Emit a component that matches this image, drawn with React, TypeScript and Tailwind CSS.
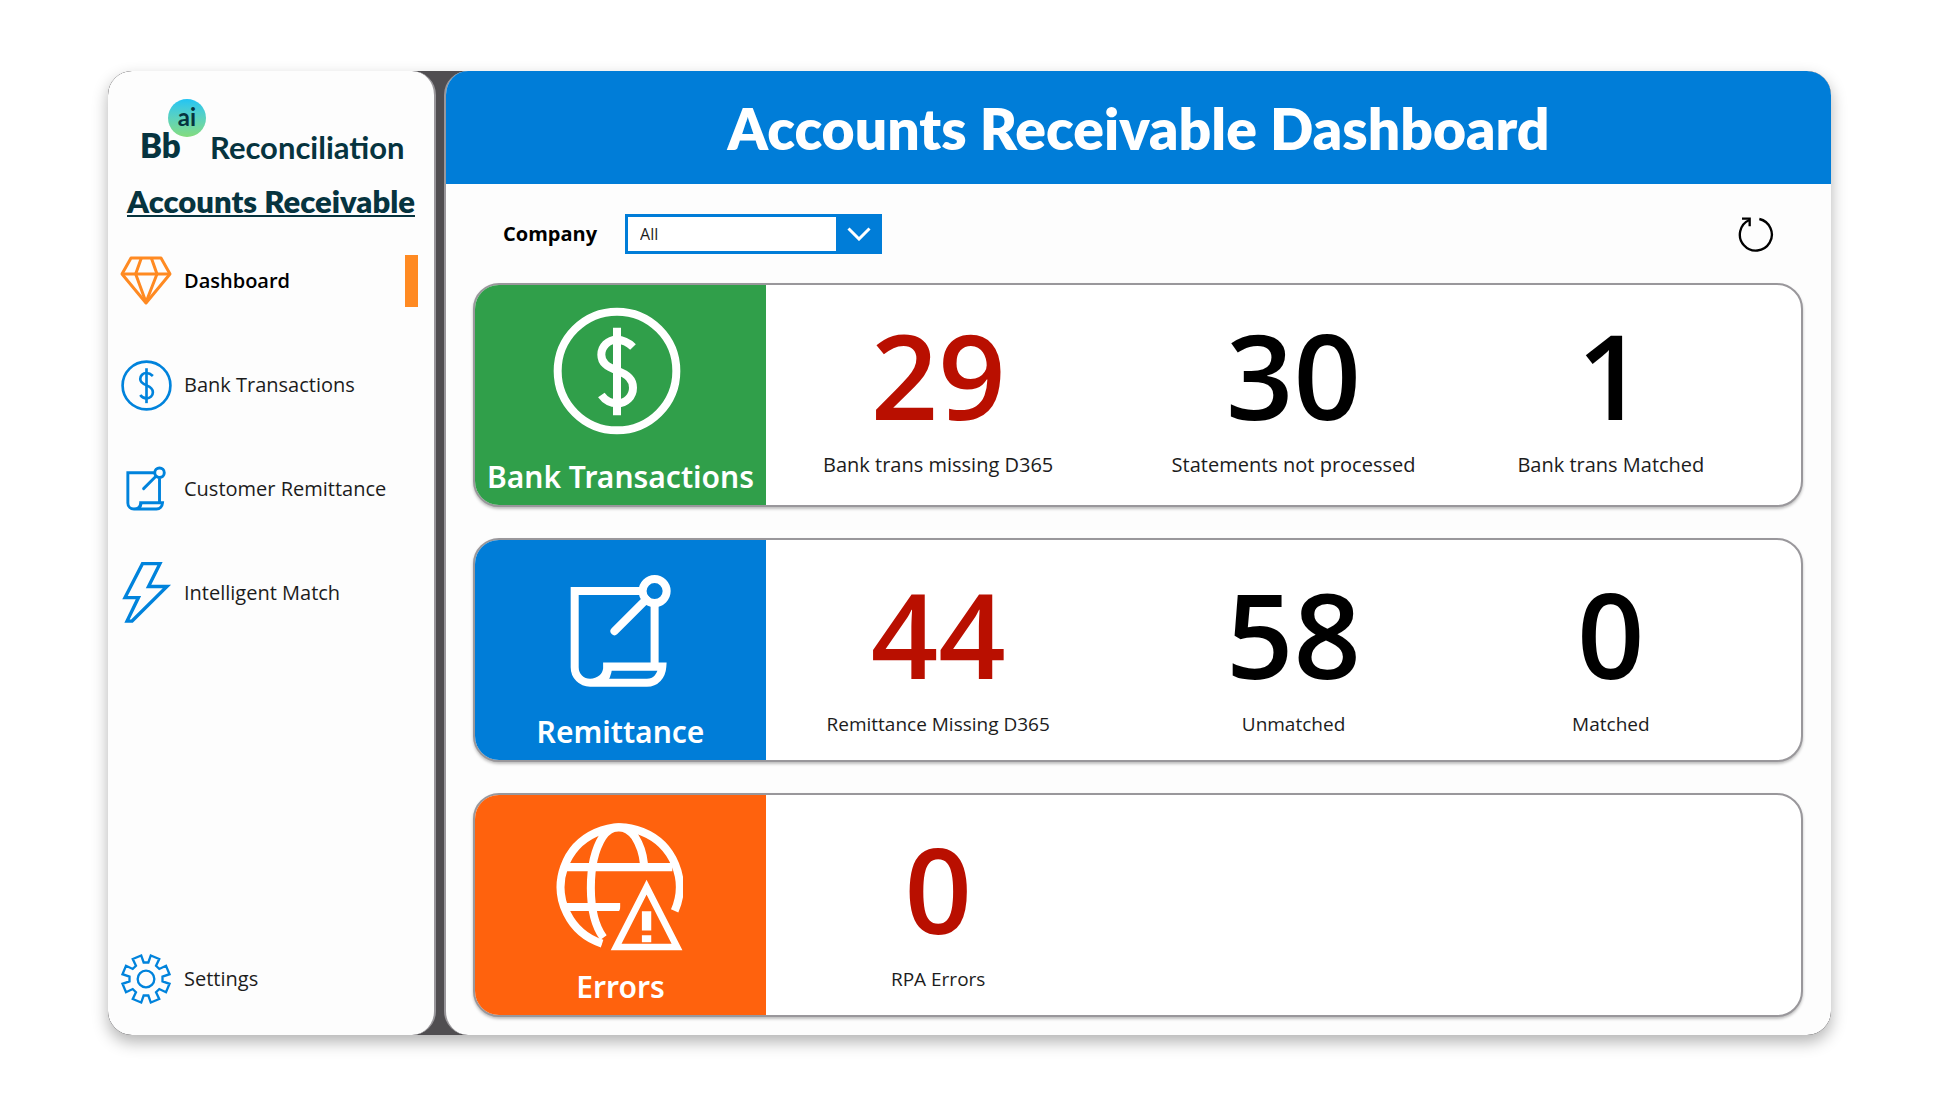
import React, { useState } from "react";
import clsx from "clsx";

type IconProps = {
  className?: string;
  strokeWidth?: number;
};

const DiamondIcon: React.FC<IconProps> = ({ className, strokeWidth = 9 }) => (
  <svg
    viewBox="90 616 156 148"
    className={className}
    fill="none"
    stroke="currentColor"
    strokeWidth={strokeWidth}
    strokeLinejoin="round"
    aria-hidden="true"
  >
    <path d="M123 622H213L240 670L168 757L96 670Z" />
    <path d="M96 670H240" />
    <path d="M154 622L137 670L168 755L201 670L184 622" />
  </svg>
);

const DollarIcon: React.FC<IconProps> = ({ className, strokeWidth = 24 }) => (
  <svg
    viewBox="277 111 384 384"
    className={className}
    fill="none"
    stroke="currentColor"
    strokeWidth={strokeWidth}
    aria-hidden="true"
  >
    <circle cx="469" cy="303" r={190 - strokeWidth / 2} />
    <path d="M469 173V436" />
    <path d="M517 231C506 220 488 209 468 209C442 209 422 230 422 254C422 278 438 290 470 302C502 315 517 328 517 353C517 380 496 400 470 400C450 400 432 389 422 375" />
  </svg>
);

const ScrollIcon: React.FC<IconProps> = ({ className, strokeWidth = 24 }) => (
  <svg
    viewBox="332 133 302 340"
    className={className}
    fill="none"
    stroke="currentColor"
    strokeWidth={strokeWidth}
    aria-hidden="true"
  >
    <path d="M544 184H346V412C346 438 366 458 392 458H562C588 458 606 438 608 410H443V416C441 440 420 458 392 458" />
    <path d="M446 414C444 430 438 446 428 456" />
    <path d="M585 226V408" />
    <circle cx="585" cy="184" r="36" />
    <path d="M560 209L465 304" strokeLinecap="round" />
  </svg>
);

const BoltIcon: React.FC<IconProps> = ({ className, strokeWidth = 10 }) => (
  <svg
    viewBox="62 726 152 188"
    className={className}
    fill="none"
    stroke="currentColor"
    strokeWidth={strokeWidth}
    aria-hidden="true"
  >
    <path d="M126 734H178L144 802H199L95 905H80L114 835H74Z" />
  </svg>
);

const GlobeWarningIcon: React.FC<IconProps> = ({ className, strokeWidth = 24 }) => (
  <svg
    viewBox="284 126 386 386"
    className={className}
    fill="none"
    stroke="currentColor"
    strokeWidth={strokeWidth}
    aria-hidden="true"
  >
    <path d="M428 490A178 178 0 1 1 645 392" />
    <path d="M432 472C382 404 382 246 430 170C456 132 498 132 526 170C540 192 550 220 553 250" />
    <path d="M318 261H638" />
    <path d="M316 380H482" />
    <path
      d="M424 503L441 466L458 466L440 512H424Z"
      className="fill-[#ff620d] stroke-none"
    />
    <path d="M490 368L478 394H500V368Z" className="fill-[#ff620d] stroke-none" />
    <path d="M561 321L470 500H652Z" strokeWidth="20" />
    <path d="M561 393V451M561 465V486" strokeWidth="28" />
  </svg>
);

const gearPath = Array.from({ length: 8 }, (_, i) => {
  const mid = i * 45 + 22.5;
  return [
    [mid - 14.5, 50],
    [mid - 11, 72],
    [mid + 11, 72],
    [mid + 14.5, 50],
  ]
    .map(([deg, r]) => {
      const rad = (deg * Math.PI) / 180;
      return `${(80 + r * Math.sin(rad)).toFixed(1)} ${(80 - r * Math.cos(rad)).toFixed(1)}`;
    })
    .join("L");
}).join("L");

const GearIcon: React.FC<IconProps> = ({ className, strokeWidth = 7 }) => (
  <svg
    viewBox="2 2 156 156"
    className={className}
    fill="none"
    stroke="currentColor"
    strokeWidth={strokeWidth}
    aria-hidden="true"
  >
    <path d={`M${gearPath}Z`} />
    <circle cx="80" cy="80" r="25" />
  </svg>
);

const RefreshIcon: React.FC<IconProps> = ({ className, strokeWidth = 7 }) => (
  <svg
    viewBox="296 494 108 110"
    className={className}
    fill="none"
    stroke="currentColor"
    strokeWidth={strokeWidth}
    aria-hidden="true"
  >
    <path d="M360 503A48 48 0 1 1 330 506" />
    <path d="M308 502H331V525" />
  </svg>
);

const Logo = () => (
  <div className="relative h-16 w-16 shrink-0 font-['Lato',sans-serif] text-[#06343f]">
    <span className="absolute bottom-0.5 left-0 text-[33px] leading-8 font-extrabold">Bb</span>
    <span className="absolute top-0 left-7 flex size-[38px] items-center justify-center rounded-full bg-linear-to-b from-[#1fc4f4] to-[#84dc7c] pb-0.5 text-2xl leading-6 font-bold">
      ai
    </span>
  </div>
);

const navItems = [
  { label: "Dashboard", icon: <DiamondIcon className="w-[52px] text-[#ff8a22]" /> },
  { label: "Bank Transactions", icon: <DollarIcon className="w-[51px]" strokeWidth={20} /> },
  { label: "Customer Remittance", icon: <ScrollIcon className="w-10" strokeWidth={22} /> },
  { label: "Intelligent Match", icon: <BoltIcon className="w-[51px]" /> },
];

type NavItemProps = {
  label: string;
  icon: React.ReactNode;
  active?: boolean;
  onClick?: () => void;
};

const NavItem: React.FC<NavItemProps> = ({ label, icon, active, onClick }) => (
  <a
    href="#"
    onClick={onClick}
    aria-current={active ? "page" : undefined}
    className={clsx(
      "flex h-16 items-center pr-4 pl-3 text-xl leading-7 text-[#1c1c1c]",
      active && "font-semibold text-black"
    )}
  >
    <span className="flex w-[52px] shrink-0 justify-center text-[#0083dc]">{icon}</span>
    <span className="ml-3 grow whitespace-nowrap">{label}</span>
    {active && <span className="h-[52px] w-[13px] bg-[#ff8a22]" />}
  </a>
);

type Stat = {
  value: number;
  label: string;
  alert?: boolean;
};

type StatCardProps = {
  title: string;
  icon: React.ReactNode;
  color: string;
  stats: Stat[];
  large?: boolean;
};

const StatCard: React.FC<StatCardProps> = ({ title, icon, color, stats, large }) => (
  <section className="flex h-56 overflow-hidden rounded-[26px] border-2 border-[#99979b] bg-white shadow-[0_2px_3px_rgba(0,0,0,0.25)]">
    <div
      className={clsx(
        "flex w-[291px] shrink-0 flex-col items-center justify-end pb-2 text-white",
        color
      )}
    >
      {icon}
      <h2 className="font-['Noto_Sans',sans-serif] text-3xl leading-10 font-semibold whitespace-nowrap">
        {title}
      </h2>
    </div>
    <div className="grid grow grid-cols-[344fr_366fr_268fr] pr-14">
      {stats.map((stat) => (
        <div
          key={stat.label}
          className={clsx("flex flex-col items-center", large ? "pt-7" : "pt-8")}
        >
          <span
            className={clsx(
              "text-[118px] leading-[124px] font-semibold",
              stat.alert ? "text-[#b90f00]" : "text-black"
            )}
          >
            {stat.value}
          </span>
          <span
            className={clsx(
              "mt-3.5 leading-7 whitespace-nowrap text-[#1c1c1c]",
              large ? "text-xl" : "text-[19px]"
            )}
          >
            {stat.label}
          </span>
        </div>
      ))}
    </div>
  </section>
);

const App = () => {
  const [company, setCompany] = useState("All");
  const [page, setPage] = useState("Dashboard");

  return (
    <div className="min-h-screen bg-white pt-[71px] pr-[129px] pb-[85px] pl-[108px] font-['Open_Sans',sans-serif]">
      <div className="flex min-h-[964px] overflow-hidden rounded-3xl bg-[#504e51] shadow-[0_7px_16px_rgba(0,0,0,0.3)]">
        <aside className="flex w-[328px] shrink-0 flex-col rounded-3xl border-r-2 border-[#99979b] bg-[#fdfdfd]">
          <div className="flex items-end pt-7 pl-8 font-['Lato',sans-serif] text-[#06343f]">
            <Logo />
            <span className="ml-1.5 text-[31px] leading-8 font-bold">Reconciliation</span>
          </div>
          <h2 className="mt-4.5 text-center font-['Lato',sans-serif] text-[31px] leading-10 font-extrabold whitespace-nowrap text-[#06343f] underline decoration-2 underline-offset-2">
            Accounts Receivable
          </h2>
          <nav className="mt-7 flex flex-col gap-10">
            {navItems.map((item) => (
              <NavItem
                key={item.label}
                label={item.label}
                icon={item.icon}
                active={page === item.label}
                onClick={() => setPage(item.label)}
              />
            ))}
          </nav>
          <div className="mt-auto pb-6">
            <NavItem label="Settings" icon={<GearIcon className="w-[52px]" />} />
          </div>
        </aside>

        <main className="ml-2 flex grow flex-col overflow-hidden rounded-3xl border-l-2 border-[#99979b] bg-[#fdfdfd]">
          <header className="flex h-[113px] items-center justify-center bg-[#007dd8]">
            <h1 className="font-['Lato',sans-serif] text-[57px] leading-[72px] font-extrabold text-white">
              Accounts Receivable Dashboard
            </h1>
          </header>

          <div className="flex items-center pt-[30px] pr-[57px] pl-[57px]">
            <label htmlFor="company" className="text-xl leading-7 font-bold text-black">
              Company
            </label>
            <div className="relative ml-7">
              <select
                id="company"
                value={company}
                onChange={(e) => setCompany(e.target.value)}
                className="block h-10 w-[257px] appearance-none border-[3px] border-[#007dd8] bg-white pl-3 text-base text-[#1c1c1c]"
              >
                <option>All</option>
              </select>
              <span className="pointer-events-none absolute inset-y-0 right-0 flex w-[46px] items-center justify-center bg-[#007dd8] text-white">
                <svg
                  viewBox="0 0 24 14"
                  className="w-6"
                  fill="none"
                  stroke="currentColor"
                  strokeWidth="3"
                  aria-hidden="true"
                >
                  <path d="M1.5 1.5L12 12L22.5 1.5" />
                </svg>
              </span>
            </div>
            <button type="button" aria-label="Refresh" className="ml-auto text-black">
              <RefreshIcon className="w-9" />
            </button>
          </div>

          <div className="flex flex-col gap-[31px] pt-[29px] pr-7 pb-[17px] pl-[27px]">
            <StatCard
              title="Bank Transactions"
              color="bg-[#309f4a]"
              icon={<DollarIcon className="mr-2 mb-[22px] w-32" />}
              large
              stats={[
                { value: 29, label: "Bank trans missing D365", alert: true },
                { value: 30, label: "Statements not processed" },
                { value: 1, label: "Bank trans Matched" },
              ]}
            />
            <StatCard
              title="Remittance"
              color="bg-[#007dd8]"
              icon={<ScrollIcon className="mb-6 w-[101px]" />}
              stats={[
                { value: 44, label: "Remittance Missing D365", alert: true },
                { value: 58, label: "Unmatched" },
                { value: 0, label: "Matched" },
              ]}
            />
            <StatCard
              title="Errors"
              color="bg-[#ff620d]"
              icon={<GlobeWarningIcon className="mr-1 mb-4 w-[129px]" />}
              stats={[{ value: 0, label: "RPA Errors", alert: true }]}
            />
          </div>
        </main>
      </div>
    </div>
  );
};

export default App;
